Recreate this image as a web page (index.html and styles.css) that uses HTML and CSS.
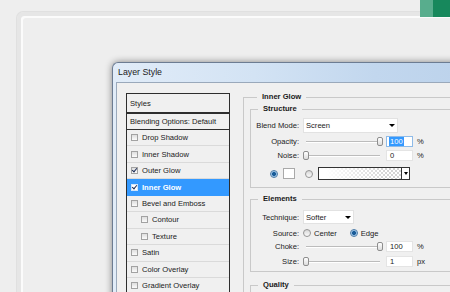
FILE: index.html
```html
<!DOCTYPE html>
<html>
<head>
<meta charset="utf-8">
<title>Layer Style</title>
<link rel="stylesheet" href="styles.css">
</head>
<body>
<div class="tile"><span class="tile-a"></span><span class="tile-b"></span></div>
<div class="frame">
  <div class="dialog">
    <div class="titlebar">Layer Style</div>
    <div class="client">
      <div class="styles-list">
        <div class="list-head">Styles</div>
        <div class="list-head short">Blending Options: Default</div>
        <ul class="list">
          <li class="item"><span class="cb"></span>Drop Shadow</li>
          <li class="item"><span class="cb"></span>Inner Shadow</li>
          <li class="item"><span class="cb on"></span>Outer Glow</li>
          <li class="item sel"><span class="cb on"></span>Inner Glow</li>
          <li class="item"><span class="cb"></span>Bevel and Emboss</li>
          <li class="item sub"><span class="cb"></span>Contour</li>
          <li class="item sub"><span class="cb"></span>Texture</li>
          <li class="item"><span class="cb"></span>Satin</li>
          <li class="item"><span class="cb"></span>Color Overlay</li>
          <li class="item"><span class="cb"></span>Gradient Overlay</li>
        </ul>
      </div>
      <fieldset class="group outer">
        <legend>Inner Glow</legend>
        <fieldset class="group structure">
          <legend>Structure</legend>
          <div class="row h15">
            <span class="lbl">Blend Mode:</span>
            <div class="select w95"><span>Screen</span><span class="arrow"></span></div>
          </div>
          <div class="row h11 mt3">
            <span class="lbl">Opacity:</span>
            <div class="slider"><span class="thumb max"></span></div>
            <div class="num focus"><span class="hl">100</span></div>
            <span class="unit">%</span>
          </div>
          <div class="row h11 mt3">
            <span class="lbl">Noise:</span>
            <div class="slider"><span class="thumb"></span></div>
            <div class="num">0</div>
            <span class="unit">%</span>
          </div>
          <div class="row h13 mt6 colors">
            <span class="radio on"></span>
            <span class="swatch"></span>
            <span class="radio r2"></span>
            <div class="gradient"><span class="gradient-fill"></span><span class="gradient-btn"><span class="arrow"></span></span></div>
          </div>
        </fieldset>
        <fieldset class="group elements">
          <legend>Elements</legend>
          <div class="row h14">
            <span class="lbl">Technique:</span>
            <div class="select w51"><span>Softer</span><span class="arrow"></span></div>
          </div>
          <div class="row h10 mt4">
            <span class="lbl">Source:</span>
            <span class="radio"></span><span class="opt">Center</span>
            <span class="radio on"></span><span class="opt">Edge</span>
          </div>
          <div class="row h11 mt3">
            <span class="lbl">Choke:</span>
            <div class="slider"><span class="thumb max"></span></div>
            <div class="num">100</div>
            <span class="unit">%</span>
          </div>
          <div class="row h11 mt4">
            <span class="lbl">Size:</span>
            <div class="slider"><span class="thumb"></span></div>
            <div class="num">1</div>
            <span class="unit">px</span>
          </div>
        </fieldset>
        <fieldset class="group quality">
          <legend>Quality</legend>
          <div class="row h15"></div>
        </fieldset>
      </fieldset>
    </div>
  </div>
</div>
</body>
</html>
```
FILE: styles.css
```css
html, body {
  margin: 0;
  height: 292px;
  overflow: hidden;
}
body {
  position: relative;
  box-sizing: border-box;
  padding: 12px 0 0 17px;
  background: #eeeeee;
  font-family: "Liberation Sans", Arial, sans-serif;
  font-size: 7.6px;
  color: #1a1a1a;
}

.tile {
  position: absolute;
  top: 0;
  right: 0;
  display: flex;
  height: 17px;
}
.tile-a { width: 13px; background: #58ad8d; }
.tile-b { width: 17px; background: #17885c; }

.frame {
  box-sizing: border-box;
  width: 480px;
  height: 320px;
  border-top: 4px solid #e6e6e6;
  border-left: 4px solid #e6e6e6;
  border-top-left-radius: 7px;
  box-shadow: inset 2px 2px 0 #fbfbfb, -1px -1px 0 #e0e0e0;
  padding: 46px 0 0 91px;
}

.dialog {
  width: 400px;
  border-top: 1px solid #6c7c92;
  border-left: 1px solid #6c7c92;
  border-top-left-radius: 6px;
  padding-left: 3px;
  background:
    linear-gradient(110deg, rgba(255,255,255,0) 0%, rgba(255,255,255,0) 82%, rgba(255,255,255,.35) 84%, rgba(255,255,255,0) 87%, rgba(255,255,255,.25) 90%, rgba(255,255,255,0) 93%),
    linear-gradient(to right, #e1ecf8 0%, #d3e3f4 35%, #c2d7ee 65%, #b9d0ea 100%);
  box-shadow: 0 0 7px rgba(0,0,0,.45);
}

.titlebar {
  height: 19px;
  line-height: 19px;
  padding-left: 2px;
  font-size: 8.8px;
  color: #1b1b1b;
}

.client {
  display: flex;
  align-items: flex-start;
  height: 260px;
  padding: 10px 0 0 9px;
  border-top: 1px solid #9aa9bb;
  border-left: 1px solid #9aa9bb;
  background: #f0f0f0;
}

/* left styles list */
.styles-list {
  flex: none;
  width: 104px;
}
.list-head {
  box-sizing: border-box;
  height: 20px;
  padding-left: 3px;
  display: flex;
  align-items: center;
  border: 1px solid #2e2e2e;
}
.list-head.short { height: 17px; }
.list {
  list-style: none;
  margin: 0;
  padding: 0;
  border-left: 1px solid #2e2e2e;
  border-right: 1px solid #2e2e2e;
}
.item {
  box-sizing: border-box;
  height: 16.45px;
  display: flex;
  align-items: center;
  gap: 4px;
  padding-left: 4px;
  border-bottom: 1px solid #dadada;
}
.item.sub { padding-left: 14px; }
.item.sel {
  background: #3399ff;
  border-bottom-color: #3399ff;
  color: #fff;
  font-weight: bold;
}

.cb {
  position: relative;
  flex: none;
  box-sizing: border-box;
  width: 7px;
  height: 7px;
  border: 1px solid #a2a2a2;
  background: linear-gradient(#dedede, #fbfbfb);
}
.cb.on::after {
  content: "";
  position: absolute;
  left: 1px;
  top: -1px;
  width: 2px;
  height: 4px;
  border-right: 1.3px solid #1d2c55;
  border-bottom: 1.3px solid #1d2c55;
  transform: rotate(40deg);
}
.sel .cb { background: #fff; border-color: #d0e4fa; }

/* group boxes */
.group {
  margin: 0;
  padding: 0;
  min-width: 0;
  border: 1px solid #c9c9c9;
}
.group legend {
  margin-left: 7px;
  padding: 0 5px;
  line-height: 10px;
  font-weight: bold;
}
.outer {
  flex: none;
  width: 240px;
  height: 300px;
  margin: -1px 0 0 13px;
  padding: 0 0 0 6px;
}
.structure {
  margin-top: 2px;
  padding: 4px 0 7px 0;
}
.elements {
  margin-top: 6px;
  padding: 6px 0 4px 0;
}
.quality {
  margin-top: 8px;
  padding: 4px 0 4px 0;
}

.row {
  display: flex;
  align-items: center;
}
.h10 { height: 10px; }
.h11 { height: 11px; }
.h13 { height: 13px; }
.h14 { height: 14px; }
.h15 { height: 15px; }
.mt3 { margin-top: 3px; }
.mt4 { margin-top: 4px; }
.mt6 { margin-top: 6px; }

.lbl {
  flex: none;
  width: 48px;
  margin-right: 4px;
  text-align: right;
}

.select {
  box-sizing: border-box;
  height: 100%;
  display: flex;
  align-items: center;
  justify-content: space-between;
  padding: 0 2px 0 2px;
  background: #fff;
  border: 1px solid #e2e2e2;
}
.w95 { width: 95px; }
.w51 { width: 51px; padding-right: 2px; }
.arrow {
  width: 0;
  height: 0;
  border-left: 3px solid transparent;
  border-right: 3px solid transparent;
  border-top: 3px solid #000;
}

.slider {
  position: relative;
  flex: none;
  width: 80px;
  height: 11px;
  margin-right: 3px;
}
.slider::before {
  content: "";
  position: absolute;
  left: 3px;
  right: 3px;
  top: 5px;
  height: 1px;
  background: #bcbcbc;
  border-bottom: 1px solid #fff;
}
.thumb {
  position: absolute;
  left: 0;
  top: 1px;
  box-sizing: border-box;
  width: 6px;
  height: 9px;
  border: 1px solid #8e8e8e;
  border-radius: 2px;
  background: linear-gradient(#ffffff, #dcdcdc);
}
.thumb.max { left: auto; right: 0; }

.num {
  flex: none;
  box-sizing: border-box;
  width: 27px;
  height: 11px;
  line-height: 9px;
  padding-left: 3px;
  margin-right: 4px;
  background: #fff;
  border: 1px solid #e4e4e4;
}
.num.focus { border-color: #8fbbe8; padding-left: 2px; }
.hl {
  display: inline-block;
  padding: 0 1px;
  background: #3399ff;
  color: #fff;
}

.colors { padding-left: 19px; }
.radio {
  flex: none;
  box-sizing: border-box;
  width: 8px;
  height: 8px;
  border-radius: 50%;
  border: 1px solid #959595;
  background: linear-gradient(#d8d8d8, #fbfbfb);
}
.radio.on {
  border-color: #4a7aa6;
  background: radial-gradient(circle, #1a5c98 0 1.6px, #7fb1de 2.2px, #e6f0fa 3.5px);
}
.swatch {
  flex: none;
  box-sizing: border-box;
  width: 12px;
  height: 11px;
  margin-left: 5px;
  background: #fff;
  border: 1px solid #a9a9a9;
}
.radio.r2 { margin-left: 10px; }
.gradient {
  flex: none;
  box-sizing: border-box;
  display: flex;
  width: 92px;
  height: 13px;
  margin-left: 5px;
  border: 1px solid #333;
}
.gradient-fill {
  flex: 1;
  background:
    linear-gradient(to right, #fff 8%, rgba(255,255,255,0) 85%),
    repeating-conic-gradient(#d4d4d4 0 25%, #ffffff 0 50%) 0 0 / 4px 4px;
}
.gradient-btn {
  width: 7px;
  display: flex;
  align-items: center;
  justify-content: center;
  border-left: 1px solid #333;
  background: #fff;
}
.gradient-btn .arrow {
  border-left-width: 2px;
  border-right-width: 2px;
  border-top-width: 3px;
}

.opt { margin: 0 13px 0 3px; }
.unit { flex: none; }
```
